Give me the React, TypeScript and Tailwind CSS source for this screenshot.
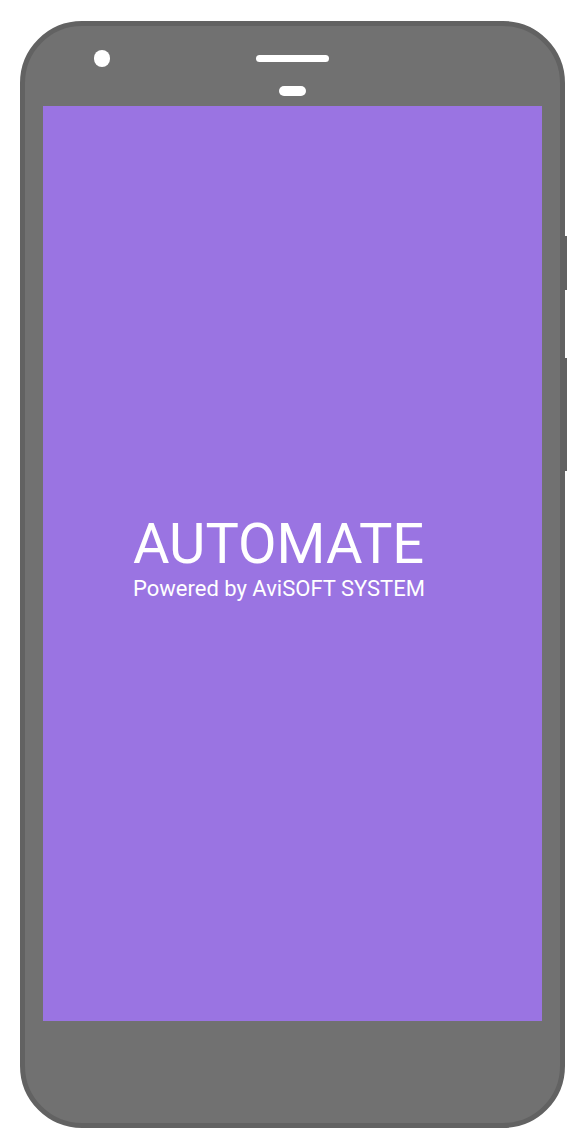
import React from "react";

export default function App() {
  return (
    <div className="w-[586px] h-[1148px] bg-white pt-[21px] pl-[20px]" style={{ fontFamily: "Roboto, 'Noto Sans', sans-serif" }}>
      <div className="relative w-[545px] h-[1107px]">
        {/* side buttons */}
        <div className="absolute left-[545px] top-[215px] w-[2px] h-[54px] bg-[#626262]" />
        <div className="absolute left-[545px] top-[337px] w-[2px] h-[113px] bg-[#626262]" />
        <div className="w-full h-full rounded-[62px] border-[5px] border-[#626262] bg-[#717171] flex flex-col">
          <div className="h-[80px] shrink-0 flex items-start pt-[24px] pl-[69px]">
            <div className="w-[16px] h-[17px] rounded-full bg-white" />
            <div className="ml-[146px] mt-[5px] flex flex-col">
              <div className="w-[73px] h-[7px] rounded-full bg-white" />
              <div className="mt-[24px] ml-[23px] w-[27px] h-[10px] rounded-full bg-white" />
            </div>
          </div>
          <div className="ml-[18px] w-[499px] h-[915px] bg-[#9a74e2] pt-[410px] pl-[90px] text-white">
            <div className="text-[56px] leading-[56px]">AUTOMATE</div>
            <div className="mt-[6px] text-[22px] leading-[22px]">Powered by AviSOFT SYSTEM</div>
          </div>
        </div>
      </div>
    </div>
  );
}
